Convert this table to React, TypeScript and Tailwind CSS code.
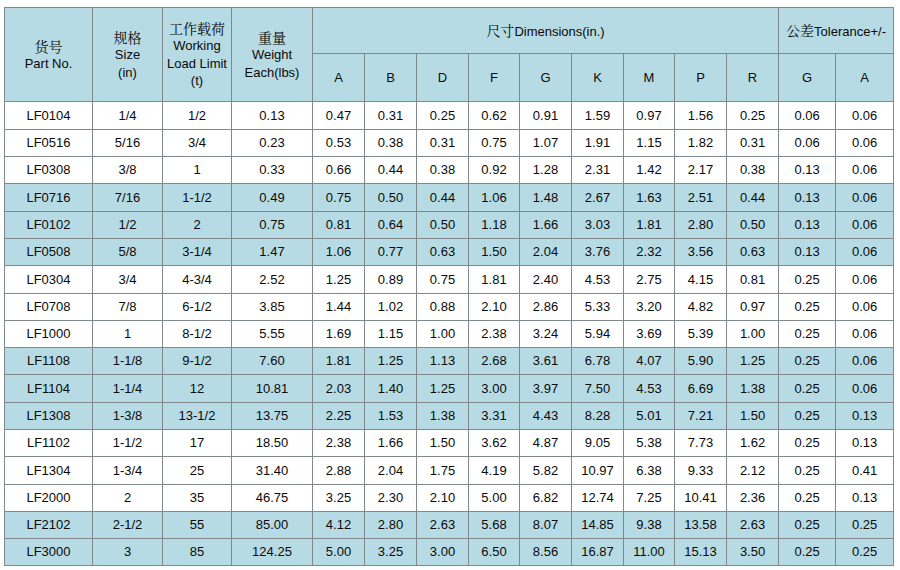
const cols = [88, 70, 69, 81, 52, 52, 52, 51, 52, 52, 51, 52, 52, 57, 58]

// [part, size, wll, weight, A, B, D, F, G, K, M, P, R, tolG, tolA], highlighted
const rows: [string[], boolean][] = [
  [['LF0104', '1/4', '1/2', '0.13', '0.47', '0.31', '0.25', '0.62', '0.91', '1.59', '0.97', '1.56', '0.25', '0.06', '0.06'], false],
  [['LF0516', '5/16', '3/4', '0.23', '0.53', '0.38', '0.31', '0.75', '1.07', '1.91', '1.15', '1.82', '0.31', '0.06', '0.06'], false],
  [['LF0308', '3/8', '1', '0.33', '0.66', '0.44', '0.38', '0.92', '1.28', '2.31', '1.42', '2.17', '0.38', '0.13', '0.06'], false],
  [['LF0716', '7/16', '1-1/2', '0.49', '0.75', '0.50', '0.44', '1.06', '1.48', '2.67', '1.63', '2.51', '0.44', '0.13', '0.06'], true],
  [['LF0102', '1/2', '2', '0.75', '0.81', '0.64', '0.50', '1.18', '1.66', '3.03', '1.81', '2.80', '0.50', '0.13', '0.06'], true],
  [['LF0508', '5/8', '3-1/4', '1.47', '1.06', '0.77', '0.63', '1.50', '2.04', '3.76', '2.32', '3.56', '0.63', '0.13', '0.06'], true],
  [['LF0304', '3/4', '4-3/4', '2.52', '1.25', '0.89', '0.75', '1.81', '2.40', '4.53', '2.75', '4.15', '0.81', '0.25', '0.06'], false],
  [['LF0708', '7/8', '6-1/2', '3.85', '1.44', '1.02', '0.88', '2.10', '2.86', '5.33', '3.20', '4.82', '0.97', '0.25', '0.06'], false],
  [['LF1000', '1', '8-1/2', '5.55', '1.69', '1.15', '1.00', '2.38', '3.24', '5.94', '3.69', '5.39', '1.00', '0.25', '0.06'], false],
  [['LF1108', '1-1/8', '9-1/2', '7.60', '1.81', '1.25', '1.13', '2.68', '3.61', '6.78', '4.07', '5.90', '1.25', '0.25', '0.06'], true],
  [['LF1104', '1-1/4', '12', '10.81', '2.03', '1.40', '1.25', '3.00', '3.97', '7.50', '4.53', '6.69', '1.38', '0.25', '0.06'], true],
  [['LF1308', '1-3/8', '13-1/2', '13.75', '2.25', '1.53', '1.38', '3.31', '4.43', '8.28', '5.01', '7.21', '1.50', '0.25', '0.13'], true],
  [['LF1102', '1-1/2', '17', '18.50', '2.38', '1.66', '1.50', '3.62', '4.87', '9.05', '5.38', '7.73', '1.62', '0.25', '0.13'], false],
  [['LF1304', '1-3/4', '25', '31.40', '2.88', '2.04', '1.75', '4.19', '5.82', '10.97', '6.38', '9.33', '2.12', '0.25', '0.41'], false],
  [['LF2000', '2', '35', '46.75', '3.25', '2.30', '2.10', '5.00', '6.82', '12.74', '7.25', '10.41', '2.36', '0.25', '0.13'], false],
  [['LF2102', '2-1/2', '55', '85.00', '4.12', '2.80', '2.63', '5.68', '8.07', '14.85', '9.38', '13.58', '2.63', '0.25', '0.25'], true],
  [['LF3000', '3', '85', '124.25', '5.00', '3.25', '3.00', '6.50', '8.56', '16.87', '11.00', '15.13', '3.50', '0.25', '0.25'], true],
]

const rowHeights = [28, 27, 27, 28, 27, 27, 28, 27, 27, 27, 28, 27, 27, 28, 27, 27, 27]

const cjk = 'font-["Noto_Serif_CJK_SC","Noto_Sans_CJK_SC",serif] text-[14px]'
const th = 'border border-[#80888b] bg-[#b7dbe4] text-center align-middle font-normal'

export default function App() {
  return (
    <div className="w-[900px] h-[570px] bg-white pt-[7px] pl-[4px] font-['Liberation_Sans',Arial,sans-serif] text-[13px] text-[#0a0a0a]">
      <table className="table-fixed border-collapse w-[890px]">
        <colgroup>
          {cols.map((w, i) => (
            <col key={i} style={{ width: w }} />
          ))}
        </colgroup>
        <thead>
          <tr className="h-[46px]">
            <th rowSpan={2} className={`${th} leading-[18px]`}>
              <div className={cjk}>货号</div>
              <div>Part No.</div>
            </th>
            <th rowSpan={2} className={`${th} leading-[18px]`}>
              <div className={cjk}>规格</div>
              <div>Size</div>
              <div>(in)</div>
            </th>
            <th rowSpan={2} className={`${th} leading-[17.5px]`}>
              <div className={cjk}>工作载荷</div>
              <div>Working</div>
              <div>Load Limit</div>
              <div>(t)</div>
            </th>
            <th rowSpan={2} className={`${th} leading-[18px]`}>
              <div className={cjk}>重量</div>
              <div>Weight</div>
              <div>Each(lbs)</div>
            </th>
            <th colSpan={9} className={th}>
              <span className={cjk}>尺寸</span>Dimensions(in.)
            </th>
            <th colSpan={2} className={th}>
              <span className={cjk}>公差</span>Tolerance+/-
            </th>
          </tr>
          <tr className="h-[48px]">
            {['A', 'B', 'D', 'F', 'G', 'K', 'M', 'P', 'R', 'G', 'A'].map((h, i) => (
              <th key={i} className={th}>
                {h}
              </th>
            ))}
          </tr>
        </thead>
        <tbody>
          {rows.map(([cells, hl], r) => (
            <tr key={r} style={{ height: rowHeights[r] }} className={hl ? 'bg-[#b7dbe4]' : 'bg-white'}>
              {cells.map((c, i) => (
                <td key={i} className="border border-[#80888b] text-center align-middle p-0">
                  {c}
                </td>
              ))}
            </tr>
          ))}
        </tbody>
      </table>
    </div>
  )
}
